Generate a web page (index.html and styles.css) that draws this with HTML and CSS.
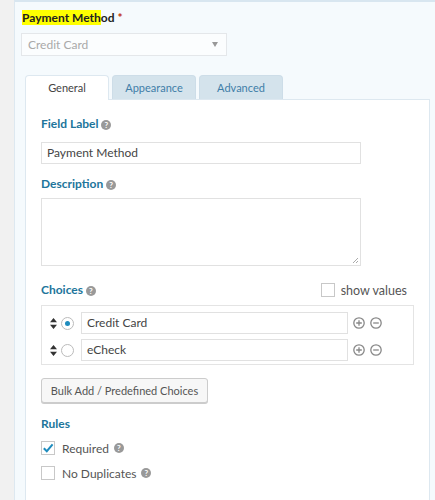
FILE: index.html
```html
<!DOCTYPE html>
<html lang="en">
<head>
  <meta charset="UTF-8">
  <title>Payment Method Field</title>
  <link rel="stylesheet" href="styles.css">
</head>
<body>
  <div class="sidebar"></div>
  <div class="main">
    <div class="preview-label"><span class="hl">Payment Meth</span>od <span class="req">*</span></div>
    <div class="select">
      <span>Credit Card</span>
      <span class="caret"></span>
    </div>

    <div class="tabs">
      <div class="tab active">General</div>
      <div class="tab">Appearance</div>
      <div class="tab">Advanced</div>
    </div>

    <div class="panel">
      <div class="heading label-heading">Field Label <span class="help">?</span></div>
      <div class="input">Payment Method</div>

      <div class="heading desc-heading">Description <span class="help">?</span></div>
      <div class="textarea"><span class="grip"></span></div>

      <div class="choices-head">
        <div class="heading">Choices <span class="help">?</span></div>
        <label class="show-values"><span class="box"></span>show values</label>
      </div>
      <div class="choices">
        <div class="choice">
          <svg class="sort" width="7" height="11" viewBox="0 0 7 11"><path d="M3.5 0L7 4.2H0z M3.5 11L0 6.8h7z" fill="#333"/></svg>
          <span class="radio checked"></span>
          <div class="input choice-input">Credit Card</div>
          <svg class="op" width="12" height="12" viewBox="0 0 12 12"><circle cx="6" cy="6" r="5.2" fill="none" stroke="#888" stroke-width="1.3"/><path d="M3.2 6h5.6M6 3.2v5.6" stroke="#888" stroke-width="1.3"/></svg>
          <svg class="op" width="12" height="12" viewBox="0 0 12 12"><circle cx="6" cy="6" r="5.2" fill="none" stroke="#888" stroke-width="1.3"/><path d="M3.2 6h5.6" stroke="#888" stroke-width="1.3"/></svg>
        </div>
        <div class="choice">
          <svg class="sort" width="7" height="11" viewBox="0 0 7 11"><path d="M3.5 0L7 4.2H0z M3.5 11L0 6.8h7z" fill="#333"/></svg>
          <span class="radio"></span>
          <div class="input choice-input">eCheck</div>
          <svg class="op" width="12" height="12" viewBox="0 0 12 12"><circle cx="6" cy="6" r="5.2" fill="none" stroke="#888" stroke-width="1.3"/><path d="M3.2 6h5.6M6 3.2v5.6" stroke="#888" stroke-width="1.3"/></svg>
          <svg class="op" width="12" height="12" viewBox="0 0 12 12"><circle cx="6" cy="6" r="5.2" fill="none" stroke="#888" stroke-width="1.3"/><path d="M3.2 6h5.6" stroke="#888" stroke-width="1.3"/></svg>
        </div>
      </div>

      <button class="bulk">Bulk Add / Predefined Choices</button>

      <div class="heading rules-heading">Rules</div>
      <label class="rule">
        <span class="box">
          <svg width="12" height="12" viewBox="0 0 12 12"><path d="M1.8 6.2l3 3L10.6 2.4" fill="none" stroke="#1e8cbe" stroke-width="2"/></svg>
        </span>
        Required <span class="help">?</span>
      </label>
      <label class="rule"><span class="box"></span>No Duplicates <span class="help">?</span></label>
    </div>
  </div>
</body>
</html>
```

FILE: styles.css
```css
body {
  margin: 0;
  display: flex;
  height: 500px;
  overflow: hidden;
  font-family: Lato, "Open Sans", Arial, sans-serif;
  font-size: 12px;
  color: #555;
  background-color: #f1f1f1;
}
.sidebar {
  width: 14px;
  flex-shrink: 0;
}
.main {
  flex: 1;
  background-color: #f5fafd;
  border-left: 1px solid #dde8f0;
  border-top: 2px solid #d8e6f0;
  padding: 8px 5px 0 6px;
}
.preview-label {
  font-weight: bold;
  color: #222;
  font-size: 12px;
  line-height: 16px;
  padding-left: 1px;
}
.hl {
  background-color: #ffff00;
}
.req {
  color: #c02b0a;
}
.select {
  margin-top: 7px;
  width: 192px;
  height: 21px;
  border: 1px solid #e4e7ea;
  background-color: #fbfdfe;
  display: flex;
  align-items: center;
  justify-content: space-between;
  padding: 0 6px;
  color: #a9a9a9;
}
.caret {
  width: 0;
  height: 0;
  border-left: 3px solid transparent;
  border-right: 3px solid transparent;
  border-top: 5px solid #999;
  margin-right: 2px;
}
.tabs {
  display: flex;
  gap: 3px;
  margin: 19px 0 0 4px;
}
.tab {
  width: 84px;
  height: 24px;
  line-height: 24px;
  font-size: 11px;
  text-align: center;
  background-color: #d4e3ec;
  color: #3f7ea8;
  border: 1px solid #cddde8;
  border-bottom: none;
  border-radius: 4px 4px 0 0;
  box-sizing: border-box;
}
.tab.active {
  background-color: #fff;
  color: #444;
  border-color: #dde8f0;
  height: 25px;
  margin-bottom: -1px;
  position: relative;
}
.panel {
  background-color: #fff;
  border: 1px solid #dde8f0;
  margin-left: 4px;
  padding: 16px 15px 0 15px;
  height: 420px;
}
.heading {
  font-weight: bold;
  color: #21759b;
  font-size: 12px;
  line-height: 16px;
}
.label-heading {
  margin-bottom: 10px;
}
.desc-heading {
  margin-bottom: 6px;
}
.rules-heading {
  margin-bottom: 9px;
}
.help {
  display: inline-block;
  width: 10px;
  height: 10px;
  line-height: 10px;
  border-radius: 50%;
  background-color: #999;
  color: #fff;
  font-size: 8px;
  font-weight: bold;
  text-align: center;
  vertical-align: 0;
}
.input {
  width: 320px;
  height: 22px;
  box-sizing: border-box;
  border: 1px solid #e1e1e1;
  padding: 0 5px;
  line-height: 20px;
  color: #444;
  margin-bottom: 12px;
}
.textarea {
  width: 320px;
  height: 68px;
  box-sizing: border-box;
  border: 1px solid #e1e1e1;
  margin-bottom: 16px;
  position: relative;
}
.grip {
  position: absolute;
  right: 2px;
  bottom: 2px;
  width: 5px;
  height: 5px;
  background: linear-gradient(135deg, transparent 45%, #aaa 45%, #aaa 55%, transparent 55%, transparent 75%, #aaa 75%, #aaa 85%, transparent 85%);
}
.choices-head {
  display: flex;
  justify-content: space-between;
  align-items: center;
  padding-right: 7px;
  height: 16px;
}
.show-values {
  display: flex;
  align-items: center;
  gap: 6px;
  font-size: 12.5px;
  color: #555;
}
.box {
  width: 14px;
  height: 14px;
  box-sizing: border-box;
  border: 1px solid #c8c8c8;
  background-color: #fff;
  display: inline-flex;
  align-items: center;
  justify-content: center;
}
.choices {
  margin-top: 7px;
  border: 1px solid #e4e4e4;
  padding: 6px 0 3px 8px;
}
.choice {
  display: flex;
  align-items: center;
  margin-bottom: 5px;
}
.choice:last-child {
  margin-bottom: 0;
}
.sort {
  margin-right: 4px;
}
.radio {
  width: 13px;
  height: 13px;
  box-sizing: border-box;
  border: 1px solid #bbb;
  border-radius: 50%;
  background-color: #fff;
  display: inline-flex;
  align-items: center;
  justify-content: center;
  margin-right: 7px;
}
.radio.checked::after {
  content: "";
  width: 5px;
  height: 5px;
  border-radius: 50%;
  background-color: #1e8cbe;
}
.choice-input {
  width: 267px;
  margin-bottom: 0;
  margin-right: 5px;
}
.op {
  margin-right: 5px;
}
.bulk {
  display: block;
  margin-top: 13px;
  width: 167px;
  height: 25px;
  font-family: Lato, "Open Sans", Arial, sans-serif;
  font-size: 11px;
  white-space: nowrap;
  color: #555;
  background-color: #f7f7f7;
  border: 1px solid #cccccc;
  border-radius: 3px;
  box-shadow: 0 1px 0 #ccc;
  padding: 0;
  margin-bottom: 13px;
}
.rule {
  display: flex;
  align-items: center;
  gap: 5px;
  height: 14px;
  margin-bottom: 11px;
  color: #555;
}
.rule .box {
  margin-right: 2px;
}
```
